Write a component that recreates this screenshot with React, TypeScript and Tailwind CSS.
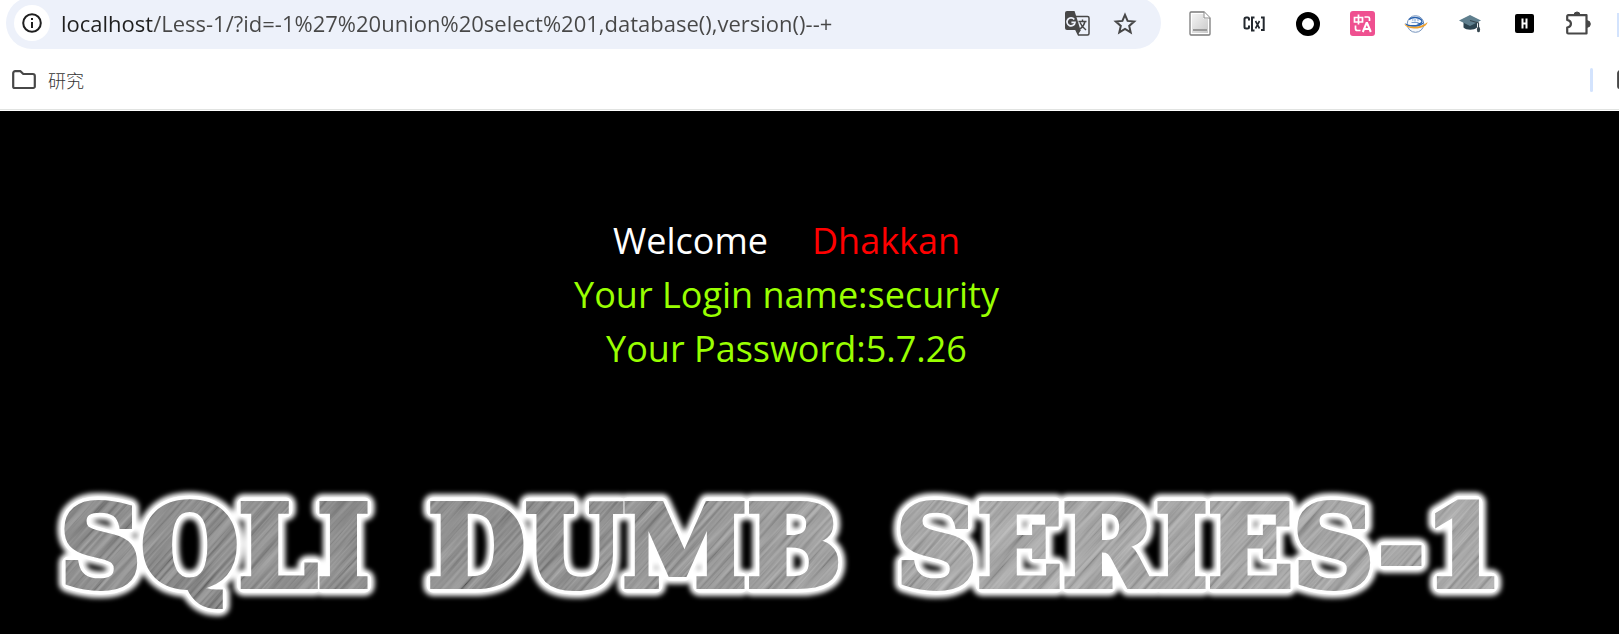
import { useState } from "react";
import type { ReactNode } from "react";

function InfoIcon() {
    return (
        <svg width="20" height="20" viewBox="0 0 20 20" fill="none" stroke="#1f1f1f" strokeWidth="2">
            <circle cx="10" cy="10" r="8.8" />
            <path d="M10 9v6M10 5v2" />
        </svg>
    );
}

function FolderIcon() {
    return (
        <svg width="24" height="20" viewBox="0 0 24 20" fill="none" stroke="#474747" strokeWidth="2.2" strokeLinejoin="round">
            <path d="M1.2 3.2a2 2 0 0 1 2-2h5.3l2.8 2.8h9.5a2 2 0 0 1 2 2v10.400a1.600 1.600 0 0 1-1.600 1.600H2.800a1.600 1.600 0 0 1-1.600-1.600z" />
        </svg>
    );
}

function TranslateIcon() {
    return (
        <svg width="25" height="25" viewBox="0 0 25 25" fill="none">
            <path d="M11 5.500h11.500a1.500 1.500 0 0 1 1.500 1.500v15.500a1.500 1.500 0 0 1-1.500 1.500H13.500L10.500 18" stroke="#474747" strokeWidth="1.500" />
            <path d="M2 0h7.500l1.500 4.500 4.500 14.500H2a2 2 0 0 1-2-2V2a2 2 0 0 1 2-2z" fill="#474747" />
            <path d="M11.500 19h4.500l-3 4.500z" fill="#474747" />
            <path d="M13.500 10.500h8M17.500 8.500v2M20 10.500c-.6 3-2.400 5.500-5 7.500M15 11.500c1.200 3 3 5 6 7.500" stroke="#474747" strokeWidth="1.400" />
            <path d="M9.300 8.600A4 4 0 1 0 10 11.300H6.400" stroke="#edf1fa" strokeWidth="1.700" />
        </svg>
    );
}

function StarIcon() {
    return (
        <svg width="24" height="23" viewBox="0 0 24 23" fill="none" stroke="#474747" strokeWidth="2">
            <path d="M12 2.800l2.600 6.100 6.600.6-5 4.400 1.500 6.500-5.700-3.400-5.700 3.400 1.500-6.500-5-4.400 6.600-.6z" />
        </svg>
    );
}

function DocIcon() {
    return (
        <svg width="22" height="25" viewBox="0 0 22 25">
            <defs>
                <linearGradient id="doc" x1="0" y1="0" x2="1" y2="1">
                    <stop offset="0" stopColor="#f4f4f4" />
                    <stop offset="1" stopColor="#c9c9c9" />
                </linearGradient>
            </defs>
            <path d="M2 1h13l6 6v16a1 1 0 0 1-1 1H2a1 1 0 0 1-1-1V2a1 1 0 0 1 1-1z" fill="#fff" stroke="#7b7b7b" strokeWidth="1.300" />
            <path d="M3 3h11.500v5H19v14H3z" fill="url(#doc)" />
            <path d="M15 1v6h6" fill="#fff" stroke="#8a8a8a" />
            <path d="M4 18h14v2H4z" fill="#999" />
        </svg>
    );
}

function BracketIcon() {
    return (
        <svg width="22" height="16" viewBox="0 0 22 16" fill="none" stroke="#23282e" strokeWidth="2">
            <path d="M6 4.500V3Q6 1.500 4.500 1.500H3.200Q1.500 1.500 1.500 3v8q0 1.500 1.700 1.500H4.500Q6 12.500 6 11V9.500" />
            <path d="M11.500 1.500H9v13h2.500M18 1.500h2.700v12.500H18" />
            <path d="M12.500 5l4 7.500M16.500 5l-4 7.500" strokeWidth="1.600" />
        </svg>
    );
}

function RingIcon() {
    return (
        <svg width="24" height="24" viewBox="0 0 24 24">
            <circle cx="12" cy="12" r="9" fill="none" stroke="#000" strokeWidth="6" />
        </svg>
    );
}

function PinkTranslateIcon() {
    return (
        <svg width="25" height="25" viewBox="0 0 25 25" fill="none" stroke="#fff" strokeWidth="1.700">
            <rect width="25" height="25" rx="3" fill="#ef5090" stroke="none" />
            <path d="M4.500 6.500h8v4.500h-8zM8.500 3.500v10" />
            <path d="M14.500 6H18q1.500 0 1.500 1.500V10M5.500 14.500v3q0 2 2 2h3" />
            <path d="M12.800 21l3.700-9h.6l3.700 9M14 18h5.500" strokeWidth="2" />
        </svg>
    );
}

function OrbitIcon() {
    return (
        <svg width="24" height="18" viewBox="0 0 24 18" fill="none">
            <circle cx="11.500" cy="9" r="8.300" fill="#f6f9fd" stroke="#7795bd" strokeWidth="1" />
            <path d="M5 4.500c3.500-3 10-2.500 12.500.5 1.500 2-.5 3.700-4 4.200" stroke="#2861ae" strokeWidth="1.300" />
            <path d="M8 5h1.500M11 4v2.500M13 5h2M7.500 7.500h7" stroke="#7ba0d2" strokeWidth="1" />
            <path d="M1.500 8c1.500 2.800 13.500 3 18.500-1C19 10 15.500 11.800 10 11.800 5 11.800.8 10.500 1.500 8z" fill="#2861ae" />
            <path d="M.5 8.500c3.500 5 18 4 23-1.500C23 11.500 16 14 10 13.500 5 13 .5 11.500.5 8.500z" fill="#f0a12b" />
        </svg>
    );
}

function GraduationIcon() {
    return (
        <svg width="23" height="18" viewBox="0 0 23 18">
            <path d="M4.500 7v5.500c3 3 10.500 3 13.500 0V7z" fill="#2c4450" />
            <path d="M0 5.500L11 0l11 5.500L11 11z" fill="#5f7f8e" />
            <path d="M11 5.500l8.500 2.500v5" fill="none" stroke="#37474f" strokeWidth="1.200" />
            <ellipse cx="19.500" cy="14.500" rx="1.600" ry="2.800" fill="#37474f" />
        </svg>
    );
}

function HIcon() {
    return (
        <svg width="19" height="19" viewBox="0 0 19 19">
            <rect width="19" height="19" rx="2" fill="#000" />
            <path d="M7.500 4.500v10M11.500 4.500v10M7.500 9.500h4" stroke="#fff" strokeWidth="2" />
        </svg>
    );
}

function PuzzleIcon() {
    return (
        <svg width="26" height="25" viewBox="0 0 26 25">
            <path
                d="M4 4.200h17.500v18.300H3.200a1 1 0 0 1-1-1v-5c5-.8 5-6.700 0-7.500V5.200a1 1 0 0 1 1-1z"
                fill="none" stroke="#474747" strokeWidth="2.200" strokeLinejoin="round"
            />
            <path d="M9 4a3 3 0 0 1 6 0zM22 9.700a3.300 3.300 0 0 1 0 6.600z" fill="#474747" stroke="#474747" />
        </svg>
    );
}

const extensions: { label: string; icon: ReactNode }[] = [
    { label: "Document", icon: <DocIcon /> },
    { label: "C[x]", icon: <BracketIcon /> },
    { label: "Ring", icon: <RingIcon /> },
    { label: "Translate text", icon: <PinkTranslateIcon /> },
    { label: "Orbit", icon: <OrbitIcon /> },
    { label: "Scholar", icon: <GraduationIcon /> },
    { label: "HackBar", icon: <HIcon /> },
    { label: "Extensions", icon: <PuzzleIcon /> },
];

function Toolbar() {
    const [url, setUrl] = useState("localhost/Less-1/?id=-1%27%20union%20select%201,database(),version()--+");

    return (
        <div className="flex h-[49px] items-center">
            <div className="-mt-[3px] ml-1.5 flex h-[52px] flex-1 items-center rounded-full bg-[#edf1fa] pr-3 pl-2">
                <button aria-label="Site information" className="flex size-9 shrink-0 items-center justify-center rounded-full bg-white">
                    <InfoIcon />
                </button>
                {/* host part is darker than the path */}
                <input
                    aria-label="Address"
                    value={url}
                    onChange={(e) => setUrl(e.target.value)}
                    spellCheck={false}
                    className="ml-[11px] min-w-0 flex-1 bg-[linear-gradient(to_right,#1f1f1f_91px,#474747_91px)] bg-clip-text font-['Open_Sans','Noto_Sans',sans-serif] text-[22px] text-transparent outline-none"
                />
                <button aria-label="Translate this page" className="flex w-12 shrink-0 justify-center"><TranslateIcon /></button>
                <button aria-label="Bookmark this tab" className="flex w-12 shrink-0 justify-center"><StarIcon /></button>
            </div>
            <div className="ml-3 flex shrink-0 pb-0.5">
                {extensions.map((ext) => (
                    <button key={ext.label} aria-label={ext.label} className="flex h-6 w-[54px] items-center justify-center">
                        {ext.icon}
                    </button>
                ))}
            </div>
            <div className="ml-3 h-6 w-0.5 shrink-0 bg-[#d3e3fd]" />
        </div>
    );
}

function BookmarkBar() {
    return (
        <div className="flex h-[60px] items-center pt-0.5 pl-3">
            <button className="flex items-center gap-3 font-['Noto_Sans_CJK_SC',sans-serif] text-lg font-light text-[#333]">
                <FolderIcon />
                研究
            </button>
            <div className="-mr-[22px] ml-auto flex items-center gap-6">
                <div className="h-6 w-[3px] rounded-full bg-[#d3e3fd]" />
                <button aria-label="All bookmarks"><FolderIcon /></button>
            </div>
        </div>
    );
}

const bannerWords = [
    { text: "SQLI", x: 60 },
    { text: "DUMB", x: 428 },
    { text: "SERIES-1", x: 896 },
];

function BannerText() {
    return bannerWords.map((word) => (
        <text key={word.text} x={word.x} y="110">{word.text}</text>
    ));
}

function Banner() {
    return (
        <svg viewBox="0 0 1619 160" className="block w-full font-['DejaVu_Serif',serif] text-[112px] font-bold" strokeLinejoin="round">
            <defs>
                <filter id="glow" x="-5%" y="-30%" width="110%" height="160%">
                    <feGaussianBlur stdDeviation="2.500" />
                </filter>
                <filter id="brushed" x="0" y="0" width="100%" height="100%">
                    <feTurbulence type="fractalNoise" baseFrequency="0.01 0.3" numOctaves="3" seed="4" />
                    <feColorMatrix values="1 0 0 0 -0.1  1 0 0 0 -0.1  1 0 0 0 -0.1  0 0 0 0 0.4" />
                </filter>
                <linearGradient id="sheen" x1="0" x2="1">
                    <stop offset="0" stopColor="#7c7c7c" />
                    <stop offset="0.350" stopColor="#808080" />
                    <stop offset="0.600" stopColor="#a8a8a8" />
                    <stop offset="1" stopColor="#a4a4a4" />
                </linearGradient>
                <pattern id="metal" width="1619" height="160" patternUnits="userSpaceOnUse">
                    <rect width="1619" height="160" fill="url(#sheen)" />
                    <g transform="rotate(-48 800 80)">
                        <rect x="0" y="-800" width="1619" height="1700" filter="url(#brushed)" />
                    </g>
                </pattern>
            </defs>
            <g aria-hidden="true" fill="#fff" stroke="#fff" strokeWidth="20" filter="url(#glow)"><BannerText /></g>
            <g aria-hidden="true" fill="#fff" stroke="#fff" strokeWidth="13"><BannerText /></g>
            <g fill="url(#metal)" stroke="url(#metal)" strokeWidth="6" strokeLinejoin="miter"><BannerText /></g>
        </svg>
    );
}

export default function App() {
    return (
        <div className="min-h-screen overflow-hidden bg-black">
            <header className="bg-white">
                <Toolbar />
                <BookmarkBar />
                <div className="h-0.5 border-t border-[#e1e3e1]" />
            </header>
            <main className="pt-[103px]">
                <div className="pr-[46px] text-center font-['Open_Sans','Noto_Sans',sans-serif] text-[36px] leading-[54px] text-[#99ff00]">
                    <p className="flex justify-center gap-11">
                        <span className="text-white">Welcome</span>
                        <span className="text-[#ff0000]">Dhakkan</span>
                    </p>
                    <p>Your Login name:security</p>
                    <p>Your Password:5.7.26</p>
                </div>
                <div className="mt-[100px]">
                    <Banner />
                </div>
            </main>
        </div>
    );
}
